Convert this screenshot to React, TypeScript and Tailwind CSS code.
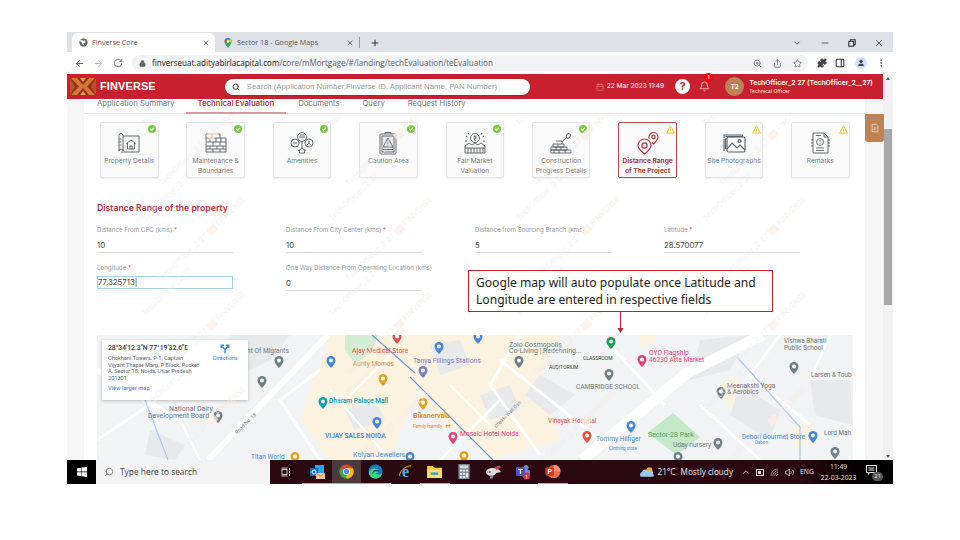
import { ArrowLeft, ArrowRight, RotateCw, Lock, Search, Star, Share, ZoomIn, Puzzle, PanelRight, User, MoreVertical, ChevronDown, Minus, X, Plus, Calendar, Bell, ChevronUp } from "lucide-react";

const ui = "font-['Inter',sans-serif]";

const cards = [
  { label: ["Property Details"], icon: "plan", done: true },
  { label: ["Maintenance &", "Boundaries"], icon: "bricks", done: true },
  { label: ["Amenities"], icon: "amenities", done: true },
  { label: ["Caution Area"], icon: "caution", done: true },
  { label: ["Fair Market", "Valuation"], icon: "market", done: true },
  { label: ["Construction", "Progress Details"], icon: "build", done: true },
  { label: ["Distance Range", "of The Project"], icon: "pins", done: false, active: true },
  { label: ["Site Photographs"], icon: "photos", done: false },
  { label: ["Remarks"], icon: "remarks", done: false },
];

function CardIcon({ name, color }: { name: string; color: string }) {
  const common = { width: 24, height: 24, viewBox: "0 0 24 24", fill: "none", stroke: color, strokeWidth: 0.9 };
  if (name === "plan")
    return (
      <svg {...common}>
        <path d="M2 4.5a2 2 0 0 1 4 0V20a2 2 0 0 0-4 0zM6 5h16v16H4" />
        <path d="M2.5 8h2M2.5 11h2M2.5 14h2" />
        <path d="M9 13l5-4 5 4M10.5 12v6h7v-6M13 18v-3h2v3" />
      </svg>
    );
  if (name === "bricks")
    return (
      <svg {...common}>
        <path d="M2 3h14v4h6v14H2z" />
        <path d="M2 7h14M2 11h20M2 15h20M2 18h20M8 3v4M12 7v4M6 7v4M17 7v4M9 11v4M16 11v4M6 15v3M13 15v3M19 15v3M9 18v3M16 18v3" />
      </svg>
    );
  if (name === "amenities")
    return (
      <svg {...common}>
        <circle cx="12" cy="6" r="4.5" />
        <circle cx="5" cy="12" r="4" />
        <circle cx="19" cy="12" r="4" />
        <path d="M9 6h6M10 4h4M3 12h4M19 10v2l-2 2M19 12l2 2" />
        <path d="M12 11v6M8 20l4-3 4 3M9.5 19v3h5v-3" />
      </svg>
    );
  if (name === "caution")
    return (
      <svg {...common}>
        <rect x="4" y="3" width="16" height="20" rx="1" />
        <rect x="6" y="5" width="12" height="16" fill="#e8eaec" />
        <path d="M9 3V1.5h6V3" />
        <path d="M12 7l5 9H7zM12 10.5v3M12 14.5v.6" />
        <path d="M7 18.5h10" />
      </svg>
    );
  if (name === "market")
    return (
      <svg {...common}>
        <circle cx="12" cy="7" r="4.5" />
        <path d="M10.5 5.2h3M10.5 7h3M11 5.2c2 0 2 3.4 0 3.4l2 1.4" />
        <path d="M3 5l1.5 1M21 5l-1.5 1M2 10h2M20 10h2M5 2l1 1.5M19 2l-1 1.5" />
        <path d="M2 22V15l4-3 3 2 3-2 3 2 3-2 4 3v7zM2 17h20M5 17v5M8 17v5M11 17v5M14 17v5M17 17v5M20 17v5" />
      </svg>
    );
  if (name === "build")
    return (
      <svg {...common}>
        <path d="M2 22v-3h20v3zM2 19v-3h16v3zM4 16v-3h11v3zM7 16v3M12 16v3M16 19v3M10 19v3M5 19v3M9 13v3M7 10h6v3" />
        <path d="M13 11l5-5M17 5l2-3 3 2-2 3-2 .5z" />
      </svg>
    );
  if (name === "pins")
    return (
      <svg {...common} strokeWidth={1.2}>
        <path d="M8.5 8a6.5 6.5 0 0 0-6.5 6.5C2 18 8.5 23 8.5 23s6.5-5 6.5-8.5A6.5 6.5 0 0 0 8.5 8z" />
        <circle cx="8.5" cy="14.5" r="2.6" />
        <path d="M17.5 1.5a4.5 4.5 0 0 0-4.5 4.5c0 .8.2 1.5.5 2M17.5 1.5A4.5 4.5 0 0 1 22 6c0 2.5-4.5 7-4.5 7l-1.5-1.8" />
        <circle cx="17.5" cy="6" r="1.7" />
      </svg>
    );
  if (name === "photos")
    return (
      <svg {...common} strokeWidth={1.1}>
        <rect x="5" y="6" width="18" height="15" rx="1.5" />
        <path d="M5 8H3.5V18M3.5 5.5h17M2 8v12M20.5 5.5V4H2v3" />
        <path d="M5 18l5-6 5 5 3-3 5 5" />
        <circle cx="17.5" cy="10" r="1.4" />
      </svg>
    );
  return (
    <svg {...common}>
      <path d="M5 2h11l4 4v16H5zM16 2v4h4" />
      <path d="M3 9h2M3 12h2M3 15h2M20 9h2M20 12h2M20 15h2" />
      <circle cx="12" cy="11" r="3.5" />
      <path d="M12 9.5v2M12 12.2v.5M8 17h8M8 19.5h8M8 4.5h5" />
    </svg>
  );
}

function Badge({ done }: { done: boolean }) {
  if (done)
    return (
      <span className="absolute top-[2px] right-[2px] w-[8px] h-[8px] rounded-full bg-[#7ac943] flex items-center justify-center">
        <svg width="6" height="6" viewBox="0 0 10 10" fill="none" stroke="#fff" strokeWidth="1.8">
          <path d="M2 5l2.2 2.2L8 3" />
        </svg>
      </span>
    );
  return (
    <svg className="absolute top-[2px] right-[1px]" width="9" height="9" viewBox="0 0 10 10" fill="#fff6d5" stroke="#f2c230" strokeWidth="1">
      <path d="M5 1l4.3 8H.7z" />
      <path d="M5 4v2.5M5 7.3v.6" strokeWidth="0.8" />
    </svg>
  );
}

function Field({ label, value, req }: { label: string; value: string; req?: boolean }) {
  return (
    <div className="w-[136px]">
      <div className="text-[6.2px] leading-[8px] text-[#969696] whitespace-nowrap">
        {label} {req && <span className="text-[#d2323c]">*</span>}
      </div>
      <div className="mt-[5px] h-[14px] border-b border-[#dcdcdc] text-[7.8px] leading-[12px] text-[#444]">{value}</div>
    </div>
  );
}

const labels: { t: string; x: number; y: number; c: string; s?: number; b?: boolean }[] = [
  { t: "ht Of Migrants", x: 247, y: 351, c: "#70757a", s: 6.6 },
  { t: "Ajay Medical Store", x: 352, y: 351, c: "#d9534f", s: 6.8 },
  { t: "Aunty Momos", x: 353, y: 364, c: "#d98a22", s: 6.6 },
  { t: "Dharam Palace Mall", x: 329, y: 401, c: "#129eaf", s: 6.6, b: true },
  { t: "National Dairy", x: 169, y: 409, c: "#70757a", s: 7 },
  { t: "Development Board", x: 148, y: 416, c: "#70757a", s: 7 },
  { t: "VIJAY SALES NOIDA", x: 325, y: 436, c: "#4a86d8", s: 6.6, b: true },
  { t: "Titan World", x: 251, y: 457, c: "#4a86d8", s: 6.6 },
  { t: "Kalyan Jewellers", x: 353, y: 455, c: "#4a86d8", s: 7 },
  { t: "Zolo Cosmopolis", x: 509, y: 345, c: "#70757a", s: 7 },
  { t: "Co-Living | Redefining...", x: 509, y: 351, c: "#70757a", s: 7 },
  { t: "CLASSROOM", x: 583, y: 358, c: "#333", s: 5 },
  { t: "AUDITORIUM", x: 549, y: 367, c: "#333", s: 5 },
  { t: "CAMBRIDGE SCHOOL", x: 576, y: 387, c: "#70757a", s: 6.6 },
  { t: "OYO Flagship", x: 649, y: 353, c: "#e8407c", s: 6.7 },
  { t: "46230 Atta Market", x: 649, y: 360, c: "#e8407c", s: 6.7 },
  { t: "Tanya Fillings Stations", x: 413, y: 361, c: "#7b7fc4", s: 6.8 },
  { t: "Bikanervala", x: 413, y: 416, c: "#d98a22", s: 7, b: true },
  { t: "Family-friendly · ₹₹", x: 413, y: 427, c: "#d98a22", s: 4.5 },
  { t: "Mosaic Hotel Noida", x: 460, y: 434, c: "#e8407c", s: 6.7 },
  { t: "Vinayak Hospital", x: 548, y: 421, c: "#d9534f", s: 6.5 },
  { t: "Tommy Hilfiger", x: 596, y: 439, c: "#4a86d8", s: 6.6 },
  { t: "Clothing store", x: 609, y: 449, c: "#4a86d8", s: 4.5 },
  { t: "Sector-28 Park", x: 648, y: 435, c: "#4f9a63", s: 7 },
  { t: "Uday nursery", x: 673, y: 445, c: "#70757a", s: 6.6 },
  { t: "Debon Gourmet Store", x: 742, y: 437, c: "#4a86d8", s: 6.6 },
  { t: "Debon", x: 755, y: 443, c: "#4a86d8", s: 4.5 },
  { t: "Meenakshi Yoga", x: 727, y: 386, c: "#70757a", s: 6.6 },
  { t: "& Aerobics", x: 727, y: 392, c: "#70757a", s: 6.6 },
  { t: "Vishwa Bharati", x: 784, y: 341, c: "#70757a", s: 6.4 },
  { t: "Public School", x: 784, y: 348, c: "#70757a", s: 6.4 },
  { t: "Larsen & Toub", x: 811, y: 375, c: "#70757a", s: 6.4 },
  { t: "Lord Mah", x: 824, y: 433, c: "#70757a", s: 6.4 },
];

const pins: [number, number, string][] = [
  [279, 362, "#6f8088"], [262, 382, "#6f8088"], [331, 362, "#4a86d8"], [397, 338, "#d9534f"], [383, 380, "#e8a020"],
  [323, 403, "#129eaf"], [218, 417, "#6f8088"], [377, 423, "#4a86d8"], [295, 458, "#e8a020"], [410, 458, "#4a86d8"],
  [439, 348, "#4a86d8"], [478, 338, "#4a86d8"], [519, 362, "#6f8088"], [611, 343, "#1e9e57"], [642, 361, "#e8407c"],
  [609, 375, "#6f8088"], [423, 372, "#7b7fc4"], [423, 404, "#e8a020"], [453, 438, "#e8407c"], [587, 437, "#e5533d"],
  [631, 427, "#4a86d8"], [464, 457, "#e8a020"], [721, 393, "#6f8088"], [794, 368, "#6f8088"], [718, 444, "#6f8088"],
  [813, 437, "#4a86d8"], [835, 453, "#6f8088"], [678, 458, "#6f8088"],
];

function MapView() {
  return (
    <div className="relative ml-[13px] w-[756px] h-[125px] overflow-hidden bg-[#f2f3f4]">
      <svg className="absolute inset-0" width="756" height="125" viewBox="97 335 756 125">
        <g fill="#fbf3e0">
          <polygon points="330,335 400,335 420,380 390,460 330,460 300,420" />
          <polygon points="400,335 560,335 540,380 560,440 490,460 420,400" />
          <polygon points="640,335 660,335 650,345 640,345" />
          <polygon points="720,385 735,375 745,400 730,410" />
          <polygon points="790,430 812,420 815,440 795,450" />
        </g>
        <g fill="#e7e9eb">
          <polygon points="230,335 290,335 270,360 240,375 225,355" />
          <polygon points="540,375 575,395 550,415 525,395" />
          <polygon points="700,340 750,335 730,370 690,380" />
          <polygon points="740,385 780,410 770,440 730,415" />
          <polygon points="810,380 850,380 853,425 815,415" />
          <polygon points="150,430 185,445 175,460 145,455" />
          <polygon points="430,345 460,340 470,365 440,375" />
          <polygon points="345,410 375,400 385,420 355,430" />
          <polygon points="480,395 510,385 520,410 490,420" />
        </g>
        <polygon points="345,335 378,335 372,352 355,363 345,350" fill="#d3ecd4" />
        <polygon points="673,413 700,437 677,455 647,433" fill="#c5e8c8" />
        <g fill="none" stroke="#fff" strokeWidth="3">
          <path d="M97 370l80 50M208 460l120-125" strokeWidth="6" />
          <path d="M582 460l105-87 76-38" strokeWidth="11" />
          <path d="M610 345l55 60M500 360l100 80M440 460l60-60M97 440l60-40" />
          <path d="M520 335l-30 50 50 70M700 405l60 55M780 335l-30 40 60 50M320 460l-40-60 40-30" />
          <path d="M330 390l60 70M400 345l-50 50M450 385l40 40M830 335l-20 45M160 380l40 80" strokeWidth="2" />
        </g>
        <g fill="none" strokeWidth="1.2">
          <path d="M372 335l43 38M410 377l83 83" stroke="#6a95cc" />
          <path d="M145 400l23 60M737 357l63 70v33" stroke="#a9c9ee" />
        </g>
      </svg>
      {labels.map((l) => (
        <span
          key={l.t}
          className="absolute whitespace-nowrap leading-none font-['Roboto',sans-serif]"
          style={{ left: l.x - 97, top: l.y - 335 - (l.s ?? 6) / 2, color: l.c, fontSize: l.s ?? 6, fontWeight: l.b ? 600 : 400 }}
        >
          {l.t}
        </span>
      ))}
      <span className="absolute left-[135px] top-[86px] -rotate-45 text-[5px] leading-none text-[#70757a] font-['Roboto',sans-serif] whitespace-nowrap">Road No. 18</span>
      <span className="absolute left-[393px] top-[77px] -rotate-45 text-[5px] leading-none text-[#70757a] font-['Roboto',sans-serif] whitespace-nowrap">Chakki Wali Gali</span>
      {pins.map(([x, y, c]) => (
        <svg key={`${x}-${y}`} className="absolute" style={{ left: x - 97 - 5, top: y - 335 - 6 }} width="10" height="12" viewBox="0 0 20 24">
          <path d="M10 0a9 9 0 0 0-9 9c0 6 9 15 9 15s9-9 9-15a9 9 0 0 0-9-9z" fill={c} />
          <circle cx="10" cy="9" r="4" fill="#fff" />
        </svg>
      ))}
      <div className="absolute left-[5px] top-[5px] w-[146px] h-[60px] bg-white shadow-[0_1px_3px_rgba(0,0,0,0.25)] px-[6px] pt-[4px] font-['Roboto',sans-serif]">
        <div className="flex">
          <div className="w-[98px]">
            <div className="text-[6.8px] leading-[8px] font-medium text-[#333] whitespace-nowrap">28°34'12.3"N 77°19'32.6"E</div>
            <div className="mt-[3px] text-[5.6px] leading-[6.5px] text-[#5b5b5b] whitespace-nowrap">
              Chokhani Towers, P-1, Captain
              <br />
              Vijyant Thapar Marg, P Block, Pocket
              <br />
              A, Sector 18, Noida, Uttar Pradesh
              <br />
              201301
            </div>
          </div>
          <div className="ml-[7px] flex flex-col items-center">
            <svg width="10" height="10" viewBox="0 0 24 24" fill="none" stroke="#4a86d8" strokeWidth="3.5">
              <path d="M12 23V13L4 5M12 13l8-8M3 10V3h7M14 3h7v7" />
            </svg>
            <span className="mt-[2px] text-[5.5px] leading-none text-[#3b78e7]">Directions</span>
          </div>
        </div>
        <div className="mt-[5px] text-[5.8px] leading-none text-[#3b78e7]">View larger map</div>
      </div>
    </div>
  );
}

// faint diagonal user stamp that the app paints over the whole form
function Watermark() {
  const tiles: [number, number][] = [];
  for (let c = 0; c < 5; c++) for (let r = 0; r < 4; r++) tiles.push([c * 187 + 76, r * 95 + 6]);
  return (
    <div className="absolute inset-0 overflow-hidden pointer-events-none text-[8px] leading-none whitespace-nowrap">
      {tiles.map(([x, y]) => (
        <div key={`${x}-${y}`}>
          <div className="absolute -rotate-[44deg] origin-left text-[#ededed]/70" style={{ left: x, top: y }}>
            TechOfficer_2 27
          </div>
          <div className="absolute -rotate-[44deg] origin-left text-[#ededed]/70" style={{ left: x + 17, top: y + 60 }}>
            TechOfficer_2 27 <span className="inline-block w-[10px] h-[8px] bg-[#fdeee4]/70 align-middle" />{" "}
            <span className="text-[#f8ece4]/80">FINVERSE</span>
          </div>
        </div>
      ))}
    </div>
  );
}

function TopBar() {
  return (
    <div className={`h-[25px] bg-[#c8202e] flex items-center text-white ${ui}`}>
      <svg className="ml-[3px]" width="26" height="17" viewBox="0 0 26 17">
        <rect width="26" height="17" fill="#9c2c20" />
        <path d="M1 0h6l6 7 6-7h6l-8 8.500 8 8.500h-6l-6-7-6 7H1l8-8.500z" fill="#cf7d31" />
        <path d="M0 17l5-8.500L0 0zM26 17l-5-8.500L26 0z" fill="#b8512a" />
        <path d="M10 0h6l-3 4zM10 17h6l-3-4z" fill="#e3a54a" />
      </svg>
      <span className="ml-[4px] text-[11px] font-bold tracking-[0.1px] font-['Liberation_Sans',sans-serif]">FINVERSE</span>
      <div className="ml-[69px] w-[305px] h-[16px] rounded-full bg-white flex items-center pl-[7px] shadow-[0_0_2px_rgba(0,0,0,0.3)]">
        <Search size={8} strokeWidth={3} className="text-[#444]" />
        <span className="ml-[7px] text-[7.8px] text-[#9a9a9a] whitespace-nowrap font-['Liberation_Sans',sans-serif]">
          Search (Application Number,Finverse ID, Applicant Name, PAN Number)
        </span>
      </div>
      <Calendar size={8} className="ml-[66px] text-[#e27f82]" />
      <span className="ml-[3px] text-[6.5px] font-medium whitespace-nowrap text-[#fbe3e3]">22 Mar 2023 11:49</span>
      <span className="ml-[11px] w-[15px] h-[15px] rounded-full bg-white text-[#c8202e] flex items-center justify-center text-[11px] font-bold leading-none">?</span>
      <div className="relative ml-[9px] w-[12px]">
        <Bell size={11} strokeWidth={1.4} />
        <span className="absolute -top-[8px] left-[5px] w-[9px] h-[9px] rounded-full bg-[#f00] text-[5px] font-bold flex items-center justify-center">1</span>
      </div>
      <span className="ml-[14px] w-[19px] h-[19px] rounded-full bg-[#bd8356] flex items-center justify-center text-[6px] font-bold">T2</span>
      <div className="ml-[5px] whitespace-nowrap">
        <div className="text-[6.8px] leading-[9px] font-semibold">TechOfficer_2 27 (TechOfficer_2__27)</div>
        <div className="text-[5px] leading-[7px] mt-[1px] font-medium text-[#f6dcdc]">Technical Officer</div>
      </div>
    </div>
  );
}

function TabBar() {
  return (
    <div className={`h-[15px] ml-[17px] mr-[18px] bg-white border-b border-[#e6e6e6] relative flex text-[7.7px] leading-[10px] text-[#7a7a7a] ${ui}`}>
      <span className="ml-[13px]">Application Summary</span>
      <span className="ml-[23px] font-semibold text-[#b4343c]">Technical Evaluation</span>
      <span className="ml-[24px]">Documents</span>
      <span className="ml-[23px]">Query</span>
      <span className="ml-[23px]">Request History</span>
      <span className="absolute left-[102px] top-[13px] w-[100px] h-[2px] bg-[#d99aa0]" />
    </div>
  );
}

function Form() {
  return (
    <div className={`relative flex-1 flex min-h-0 bg-[#f6f6f6] ${ui}`}>
      <div className="ml-[17px] w-[781px] bg-white relative overflow-hidden">
        <div className="pl-[16px] pt-[8px] flex gap-[27.9px]">
          {cards.map((c) => (
            <div
              key={c.icon}
              className={`relative w-[58.5px] h-[56px] rounded-[2px] border bg-[#fafafa] flex flex-col items-center pt-[8px] shadow-[0_1px_2px_rgba(0,0,0,0.08)] ${
                c.active ? "border-[#b8474c]" : "border-[#e4e4e4]"
              }`}
            >
              <Badge done={c.done} />
              <CardIcon name={c.icon} color={c.active ? "#b8353b" : "#555d66"} />
              <div
                className={`mt-[1px] text-[6.6px] leading-[10px] text-center whitespace-nowrap ${
                  c.active ? "font-bold text-[#a93b40]" : "text-[#7b7b7b]"
                }`}
              >
                {c.label.map((l) => (
                  <div key={l}>{l}</div>
                ))}
              </div>
            </div>
          ))}
        </div>
        <h2 className="ml-[13px] mt-[24px] text-[8.7px] leading-[12px] font-semibold text-[#c0313c]">Distance Range of the property</h2>
        <div className="ml-[13px] mt-[12px] grid grid-cols-[repeat(4,189px)]">
          <Field label="Distance From CPC (kms)" value="10" req />
          <Field label="Distance From City Center (kms)" value="10" req />
          <Field label="Distance from Sourcing Branch (kms)" value="5" />
          <Field label="Latitude" value="28.570077" req />
        </div>
        <div className="ml-[13px] mt-[11px] grid grid-cols-[repeat(4,189px)]">
          <div className="w-[136px]">
            <div className="text-[6.2px] leading-[8px] text-[#969696]">
              Longitude <span className="text-[#d2323c]">*</span>
            </div>
            <div className="mt-[4px] h-[13px] border border-[#a9d4e6] text-[7.8px] leading-[11px] text-[#444]">77.325713|</div>
          </div>
          <Field label="One Way Distance From Operating Location (kms)" value="0" />
        </div>
        <div className="mt-[44px]">
          <MapView />
        </div>
      </div>
      <Watermark />
      <div className="absolute left-[798px] top-0 w-[19px] h-[28px] rounded-b-[3px] bg-[#bd8356] flex justify-center pt-[9px]">
        <svg width="10" height="10" viewBox="0 0 24 24" fill="none" stroke="#f3dcc8" strokeWidth="2">
          <path d="M5 3h10l4 4v14H5zM8 12h8M8 16h5" />
        </svg>
      </div>
      <div className="absolute left-[401px] top-[156px] w-[305px] h-[42px] bg-white border-[1.5px] border-[#c8202e] px-[7px] pt-[3px] text-[12.1px] leading-[17px] text-[#222] font-['Noto_Sans',sans-serif] whitespace-nowrap">
        Google map will auto populate once Latitude and
        <br />
        Longitude are entered in respective fields
      </div>
      <svg className="absolute left-[549px] top-[198px]" width="9" height="22" viewBox="0 0 9 22">
        <path d="M4.5 0v17" stroke="#c8202e" strokeWidth="1" />
        <path d="M1.5 16h6l-3 5z" fill="#c8202e" />
      </svg>
    </div>
  );
}

function Taskbar() {
  const icons = [
    <svg key="ol" width="16" height="16" viewBox="0 0 16 16"><rect x="6" y="1" width="9" height="9" fill="#28a8ea" /><rect x="1" y="4" width="8" height="8" fill="#0f6cbd" /><circle cx="5" cy="8" r="2" fill="none" stroke="#fff" /><rect x="7" y="9" width="9" height="6" fill="#f2c4a0" /><path d="M7 9l4.5 3L16 9" fill="none" stroke="#b07a50" strokeWidth=".7" /></svg>,
    <svg key="ch" width="15" height="15" viewBox="0 0 16 16"><circle cx="8" cy="8" r="7.5" fill="#ea4335" /><path d="M8 8L1.5 4.2A7.5 7.5 0 0 0 8 15.5z" fill="#34a853" /><path d="M8 8v7.5A7.5 7.5 0 0 0 14.8 4.5H8z" fill="#fbbc04" /><circle cx="8" cy="8" r="3.6" fill="#fff" /><circle cx="8" cy="8" r="2.7" fill="#4285f4" /></svg>,
    <svg key="ed" width="15" height="15" viewBox="0 0 16 16"><circle cx="8" cy="8" r="7.5" fill="#0f7fc4" /><path d="M1 9c1-5 8-6 10-2 1 2-1 3-3 3 2 2 5 1 7 0-1 4-4 5.500-7 5.500-4 0-7-3-7-6.500z" fill="#45d07e" /><path d="M5 11c-1-3 1-5 4-5 2 0 3 1 3 2H6z" fill="#0a3f78" /></svg>,
    <svg key="ie" width="15" height="15" viewBox="0 0 16 16" fill="none"><text x="8" y="13.500" textAnchor="middle" fontSize="17" fontWeight="700" fill="#38b6f1" fontFamily="Liberation Serif, serif">e</text><path d="M2 13C0 9 9 1 14 2" stroke="#f2c230" strokeWidth="1" /></svg>,
    <svg key="ex" width="15" height="13" viewBox="0 0 16 14"><path d="M0 1h6l2 2h8v11H0z" fill="#f7c948" /><rect y="5" width="16" height="9" fill="#fcdc6a" /><rect x="4" y="8" width="8" height="2.500" fill="#2b9fd9" /></svg>,
    <svg key="ca" width="12" height="15" viewBox="0 0 12 16"><rect width="12" height="16" fill="#7c8a96" /><rect x="1.500" y="1.500" width="9" height="3" fill="#cfd8dc" /><g fill="#e5eaee"><rect x="1.500" y="6" width="2.500" height="2" /><rect x="4.700" y="6" width="2.500" height="2" /><rect x="8" y="6" width="2.500" height="2" /><rect x="1.500" y="9.500" width="2.500" height="2" /><rect x="4.700" y="9.500" width="2.500" height="2" /><rect x="8" y="9.500" width="2.500" height="5" /><rect x="1.500" y="13" width="2.500" height="2" /><rect x="4.700" y="13" width="2.500" height="2" /></g></svg>,
    <svg key="pa" width="17" height="14" viewBox="0 0 18 14"><path d="M1 8c0-4 5-6 9-5 3 .5 6 2 7 4l-5 1c-1 3-8 5-11 0z" fill="#d8dde2" /><path d="M10 2l5-2 2 2-5 3z" fill="#c7455a" /><circle cx="5" cy="7" r="1.200" fill="#c7455a" /><path d="M6 11l-1 3h3l1-3z" fill="#8a97a3" /></svg>,
    <svg key="te" width="16" height="16" viewBox="0 0 16 16"><circle cx="11" cy="3.500" r="2.500" fill="#7b83eb" /><rect x="7" y="6" width="8" height="7" rx="1.500" fill="#7b83eb" /><rect x="1" y="3" width="9" height="9" rx="1" fill="#4b53bc" /><path d="M3 5.500h5M5.500 5.500V10" stroke="#fff" strokeWidth="1.200" /><circle cx="11.500" cy="12" r="3.500" fill="#d13438" /><text x="11.500" y="14.500" textAnchor="middle" fontSize="6" fill="#fff">1</text></svg>,
    <svg key="pp" width="16" height="15" viewBox="0 0 16 16"><circle cx="9" cy="8" r="7" fill="#ed6c47" /><path d="M9 8V1a7 7 0 0 1 7 7z" fill="#ff8f6b" /><rect x="0" y="3.500" width="9" height="9" rx="1" fill="#c43e1c" /><text x="4.500" y="10.500" textAnchor="middle" fontSize="7" fill="#fff" fontWeight="700" fontFamily="Liberation Sans, sans-serif">P</text></svg>,
  ];
  return (
    <div className="h-[24px] bg-[#2a0a10] flex items-stretch font-['Open_Sans',sans-serif] text-[#e8e8e8]">
      <div className="w-[29px] bg-black flex items-center justify-center">
        <svg width="10" height="10" viewBox="0 0 10 10" fill="#fff"><path d="M0 1.300L4.300.7v3.900H0zM4.800.6L10 0v4.600H4.800zM0 5.200h4.300v3.900L0 8.500zM4.800 5.200H10V10l-5.200-.7z" /></svg>
      </div>
      <div className="w-[174px] bg-[#f3f3f3] flex items-center pl-[8px] text-[#444]">
        <Search size={10} strokeWidth={1.4} className="-scale-x-100" />
        <span className="ml-[6px] text-[8.4px] whitespace-nowrap">Type here to search</span>
      </div>
      <div className="w-[27px] ml-[2px] flex items-center justify-center">
        <svg width="10" height="10" viewBox="0 0 10 10" fill="none" stroke="#ddd" strokeWidth=".9"><rect x="1" y="2.500" width="5" height="5" /><path d="M.5 1h6M.5 9h6M8.500 1v2M8.500 4v2M8.500 7v2" /></svg>
      </div>
      <div className="flex ml-[3px]">
        {icons.map((ic, i) => (
          <div
            key={i}
            className={`w-[29.5px] flex items-center justify-center border-b-[1.5px] ${i === 1 ? "bg-[#4a3a3e] border-[#7db8e8]" : i === 2 || i === 0 || i === 4 || i === 8 ? "border-[#7db8e8]" : "border-transparent"}`}
          >
            {ic}
          </div>
        ))}
      </div>
      <div className="ml-[72px] flex items-center">
        <svg width="15" height="12" viewBox="0 0 16 12"><circle cx="10" cy="4" r="3.200" fill="#f5a623" /><path d="M1 11a3 3 0 0 1 1-5 4 4 0 0 1 7-1 3 3 0 0 1 5 3 2 2 0 0 1 0 3z" fill="#9cc8ec" /></svg>
        <span className="ml-[3px] text-[8.2px] whitespace-nowrap">21°C</span>
        <span className="ml-[5px] text-[8.2px] whitespace-nowrap">Mostly cloudy</span>
      </div>
      <div className="ml-[8px] flex items-center gap-[5px] flex-1 bg-gradient-to-r from-[#2a0a10] from-40% to-black">
        <ChevronUp size={10} />
        <svg width="9" height="7" viewBox="0 0 9 7" fill="none" stroke="#ddd"><rect x=".5" y=".5" width="7" height="6" /><rect x="2" y="2" width="3" height="3" fill="#ddd" stroke="none" /></svg>
        <svg width="9" height="9" viewBox="0 0 10 10" fill="none" stroke="#aaa" strokeWidth=".8"><path d="M1 9a8 8 0 0 1 8-8M3 9a6 6 0 0 1 6-6M5 9a4 4 0 0 1 4-4M7 9a2 2 0 0 1 2-2" /></svg>
        <svg width="11" height="9" viewBox="0 0 11 10" fill="none" stroke="#ddd" strokeWidth=".8"><path d="M1 3.500h2L5.500 1v8L3 6.500H1zM7 3.500a2 2 0 0 1 0 3M8.500 2a4 4 0 0 1 0 6" /></svg>
        <span className="text-[6.8px]">ENG</span>
        <div className="ml-[2px] text-[6.8px] leading-[11px] text-center whitespace-nowrap">
          <div>11:49</div>
          <div>22-03-2023</div>
        </div>
        <div className="relative ml-[5px] w-[14px] h-[14px]">
          <svg width="11" height="10" viewBox="0 0 11 10" fill="none" stroke="#e8e8e8"><path d="M.5.500h10v7h-7l-1 2v-2h-2zM2.500 3h6M2.500 5h6" /></svg>
          <span className="absolute -right-[3px] bottom-[-2px] w-[11px] h-[9px] rounded-full bg-[#555] text-[6px] leading-[9px] text-center">21</span>
        </div>
      </div>
    </div>
  );
}

export default function App() {
  return (
    <div className="w-[960px] h-[540px] bg-white pt-[32px] pl-[67px] overflow-hidden">
      <div className="w-[826px] h-[452px] flex flex-col overflow-hidden">
        {/* browser chrome */}
        <div className="h-[20px] bg-[#dee1e6] flex items-end font-['Open_Sans',sans-serif] text-[7.2px] text-[#555]">
          <div className="ml-[5px] w-[143px] h-[19px] bg-white rounded-t-[6px] flex items-center pl-[7px]">
            <svg width="9" height="9" viewBox="0 0 12 12" fill="#5f6368"><circle cx="6" cy="6" r="5.500" /><path d="M3 2l3 2 2-1 1 3-3 1 1 3-3-2-1-3-2-1z" fill="#fff" /></svg>
            <span className="ml-[4px] flex-1">Finverse Core</span>
            <X size={8} strokeWidth={2.4} className="mr-[5px] text-[#444]" />
          </div>
          <div className="w-[145px] h-[19px] flex items-center pl-[9px]">
            <svg width="8" height="10" viewBox="0 0 16 20"><path d="M8 0a7 7 0 0 0-7 7c0 5 7 13 7 13s7-8 7-13a7 7 0 0 0-7-7z" fill="#34a853" /><path d="M8 0a7 7 0 0 0-5 2l5 5 5-5a7 7 0 0 0-5-2z" fill="#4285f4" /><path d="M3 2l5 5-6 2a7 7 0 0 1 1-7z" fill="#ea4335" /><path d="M13 2l-5 5 6.500 1A7 7 0 0 0 13 2z" fill="#fbbc04" /><circle cx="8" cy="7" r="2.500" fill="#fff" /></svg>
            <span className="ml-[5px] flex-1 whitespace-nowrap">Sector 18 - Google Maps</span>
            <X size={8} strokeWidth={2.4} className="mr-[5px] text-[#444]" />
            <span className="w-px h-[11px] bg-[#999]" />
          </div>
          <div className="h-[19px] flex items-center ml-[10px]">
            <Plus size={10} strokeWidth={2.4} className="text-[#333]" />
          </div>
          <div className="ml-auto h-[19px] flex items-center gap-[18px] pr-[9px] text-[#444]">
            <ChevronDown size={10} />
            <Minus size={10} />
            <svg width="8" height="8" viewBox="0 0 10 10" fill="none" stroke="#333" strokeWidth="1.400"><rect x="1" y="3" width="6" height="6" /><path d="M3 3V1h6v6H7" /></svg>
            <X size={10} />
          </div>
        </div>
        <div className="h-[22px] bg-white flex items-center text-[#5f6368] font-['Open_Sans',sans-serif]">
          <ArrowLeft size={11} className="ml-[7px]" />
          <ArrowRight size={11} className="ml-[8px] text-[#b5b7ba]" />
          <RotateCw size={10} className="ml-[9px]" />
          <div className="ml-[9px] w-[676px] h-[16px] rounded-full bg-[#f1f3f4] flex items-center pl-[7px]">
            <Lock size={7} fill="#5f6368" />
            <span className="ml-[6px] text-[8.1px] whitespace-nowrap">
              <span className="text-[#222]">finverseuat.adityabirlacapital.com</span>/core/mMortgage/#/landing/techEvaluation/teEvaluation
            </span>
            <div className="ml-auto flex items-center gap-[11px] pr-[6px]">
              <ZoomIn size={9} />
              <Share size={9} />
              <Star size={9} />
            </div>
          </div>
          <Puzzle size={10} fill="#444" className="ml-[9px] text-[#444]" />
          <PanelRight size={10} strokeWidth={2.5} className="ml-[8px] text-[#333]" />
          <span className="ml-[10px] w-[12px] h-[12px] rounded-full bg-[#d3e3fd] flex items-center justify-center">
            <User size={8} fill="#444" className="text-[#444]" />
          </span>
          <MoreVertical size={10} className="ml-[9px]" />
        </div>

        <div className="flex-1 flex min-h-0">
          <div className="w-[816px] flex flex-col min-h-0 bg-[#f6f6f6]">
            <TopBar />
            <TabBar />
            <Form />
          </div>
          <div className="w-[10px] bg-[#f1f1f1] flex flex-col items-center">
            <span className="mt-[3px] w-0 h-0 border-x-[2.5px] border-x-transparent border-b-[3px] border-b-[#555]" />
            <div className="mt-[49px] w-[8px] h-[176px] bg-[#a8a8a8]" />
            <span className="mt-auto mb-[2px] w-0 h-0 border-x-[2.5px] border-x-transparent border-t-[3px] border-t-[#555]" />
          </div>
        </div>
        <Taskbar />
      </div>
    </div>
  );
}
